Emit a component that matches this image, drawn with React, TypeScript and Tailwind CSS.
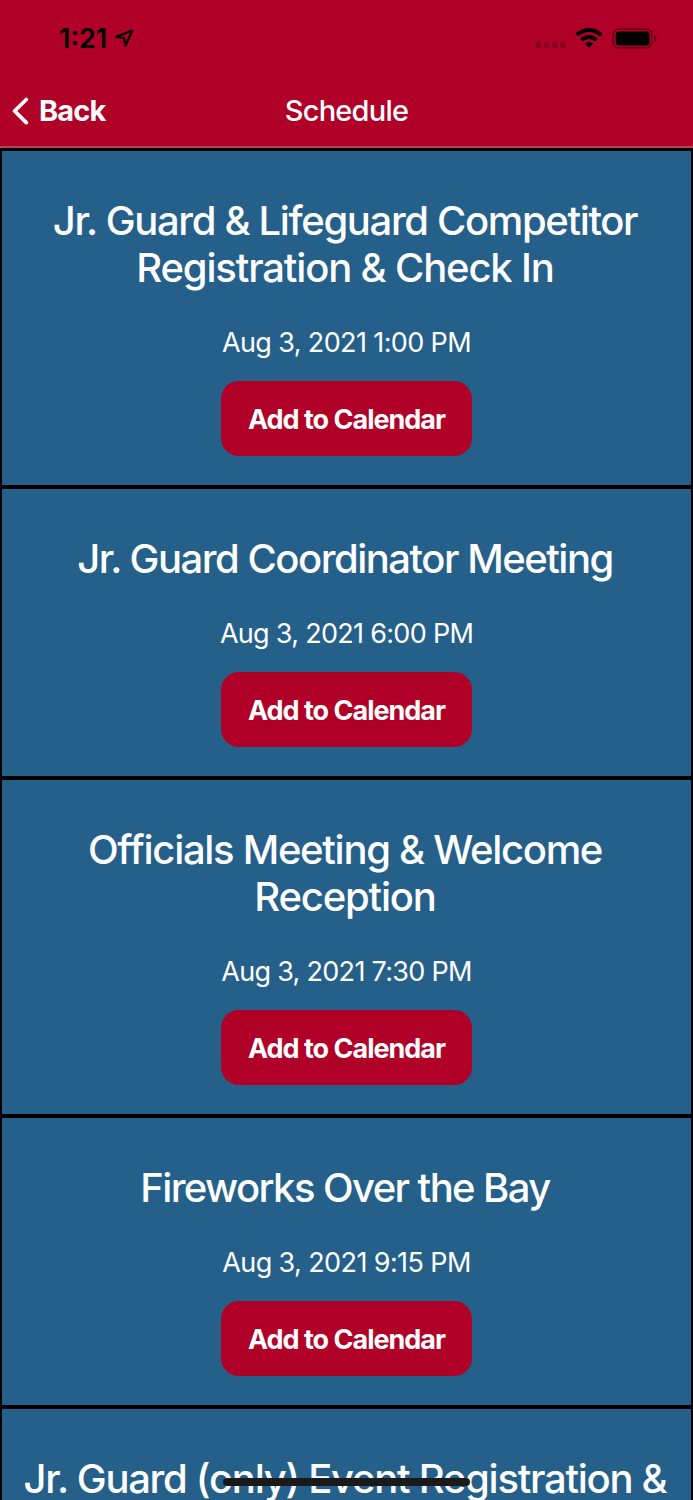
type TitleLine = {
  text: string;
  tracking: string;
};

type ScheduleEvent = {
  lines: TitleLine[];
  date?: string;
  dateTracking?: string;
};

const events: ScheduleEvent[] = [
  {
    lines: [
      { text: "Jr. Guard & Lifeguard Competitor", tracking: "tracking-[-1.35px]" },
      { text: "Registration & Check In", tracking: "tracking-[-1.17px]" },
    ],
    date: "Aug 3, 2021 1:00 PM",
    dateTracking: "tracking-[-0.62px]",
  },
  {
    lines: [{ text: "Jr. Guard Coordinator Meeting", tracking: "tracking-[-1.48px]" }],
    date: "Aug 3, 2021 6:00 PM",
    dateTracking: "tracking-[-0.7px]",
  },
  {
    lines: [
      { text: "Officials Meeting & Welcome", tracking: "tracking-[-1.3px]" },
      { text: "Reception", tracking: "tracking-[-1.2px]" },
    ],
    date: "Aug 3, 2021 7:30 PM",
    dateTracking: "tracking-[-0.7px]",
  },
  {
    lines: [{ text: "Fireworks Over the Bay", tracking: "tracking-[-1.58px]" }],
    date: "Aug 3, 2021 9:15 PM",
    dateTracking: "tracking-[-0.6px]",
  },
  {
    lines: [{ text: "Jr. Guard (only) Event Registration &", tracking: "tracking-[-1.28px]" }],
  },
];

const LocationArrow = () => (
  <svg width="20" height="18" viewBox="0 0 20 18" fill="none" stroke="#000" strokeWidth="2.2" strokeLinejoin="round">
    <path d="M18.2 1.6 2 8 10 9 11.6 16.6Z" />
  </svg>
);

const SignalDots = () => (
  <svg width="32" height="6" viewBox="0 0 32 6" fill="#000" fillOpacity="0.25">
    <circle cx="3.2" cy="3" r="3" />
    <circle cx="11.5" cy="3" r="3" />
    <circle cx="19.9" cy="3" r="3" />
    <circle cx="28.2" cy="3" r="3" />
  </svg>
);

const Wifi = () => (
  <svg width="28" height="20" viewBox="0 0 28 20" fill="none" stroke="#000" strokeWidth="3.9">
    <path d="M1.8 7.2Q7.2 2 14 2T26.2 7.2" />
    <path d="M6.5 12.2Q9.8 9 14 9T21.5 12.2" />
    <path d="M14 19.8 10 15.8Q14 12.4 18 15.8Z" fill="#000" stroke="none" />
  </svg>
);

const Battery = () => (
  <svg width="45" height="21" viewBox="0 0 45 21">
    <rect x="1" y="1" width="39" height="18.8" rx="6" fill="none" stroke="#000" strokeOpacity="0.45" strokeWidth="1.5" />
    <rect x="3.7" y="3.5" width="33.8" height="13.9" rx="3.4" fill="#000" />
    <path d="M42 7Q44.4 8 44.4 10.4T42 13.8Z" fill="#000" fillOpacity="0.45" />
  </svg>
);

const StatusBar = () => (
  <div className="flex h-[76px] justify-between pt-[18px] pr-[36px] pl-[59px] text-black">
    <div className="flex h-10 items-center gap-[7px]">
      <span className="pt-px text-[27px] leading-10 font-semibold">1:21</span>
      <LocationArrow />
    </div>
    <div className="flex h-10 items-center">
      <div className="mt-[14px] mr-[8px]">
        <SignalDots />
      </div>
      <Wifi />
      <div className="ml-[9px]">
        <Battery />
      </div>
    </div>
  </div>
);

const NavBar = () => (
  <div className="grid h-[70px] grid-cols-3 items-center">
    <button className="flex items-center gap-[10px] pl-[12px] text-[29px] leading-10 font-bold tracking-[-0.9px]">
      <svg width="17" height="28" viewBox="0 0 17 28" fill="none" stroke="currentColor" strokeWidth="3.8" strokeLinecap="round" strokeLinejoin="round">
        <path d="M14.3 2.5 2.6 14 14.3 25.6" />
      </svg>
      Back
    </button>
    <h1 className="text-center text-[29px] leading-10 font-medium tracking-[-0.75px]">Schedule</h1>
  </div>
);

const EventCard = ({ event }: { event: ScheduleEvent }) => (
  <section className="flex shrink-0 flex-col items-center border-2 border-black bg-[#25608a] pt-[46px] pb-[29px]">
    <h2 className="pr-[3px] text-center text-[40px] leading-[47px] font-medium whitespace-nowrap">
      {event.lines.map((line) => (
        <span key={line.text} className={`block ${line.tracking}`}>
          {line.text}
        </span>
      ))}
    </h2>
    {event.date && (
      <>
        <p className={`mt-[36px] text-[27px] leading-8 ${event.dateTracking}`}>{event.date}</p>
        <button className="mt-[22px] h-[75px] w-[251px] rounded-[18px] bg-[#b00027] pt-[3px] text-[27px] font-bold tracking-[-1px]">
          Add to Calendar
        </button>
      </>
    )}
  </section>
);

const App = () => (
  <div className="relative flex h-[1500px] w-[693px] flex-col overflow-hidden bg-[#25608a] font-['Inter',sans-serif] text-white">
    <header className="h-[148px] shrink-0 border-b-2 border-[#b04459] bg-[#b00027]">
      <StatusBar />
      <NavBar />
    </header>
    <main className="flex flex-col border-t border-black">
      {events.map((event) => (
        <EventCard key={event.lines[0].text} event={event} />
      ))}
    </main>
    {/* home indicator */}
    <div className="absolute bottom-[14px] left-[223px] h-2 w-[247px] rounded-full bg-[#1a1a1a]" />
  </div>
);

export default App;
